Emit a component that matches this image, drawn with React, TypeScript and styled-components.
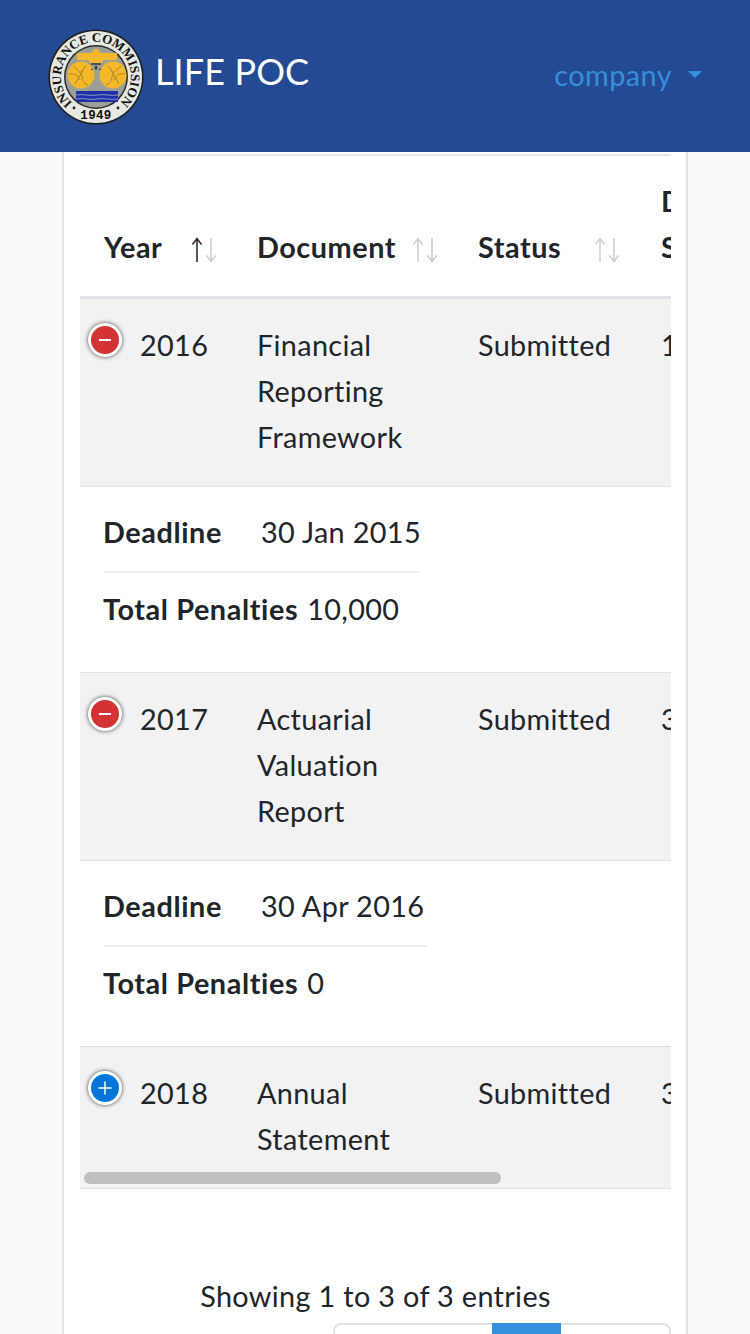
import React from "react";
import styled, { createGlobalStyle } from "styled-components";

const Global = createGlobalStyle`
  html, body { margin: 0; padding: 0; background: #f8fafc; }
  body { font-family: "Lato", "Open Sans", sans-serif; color: #212529; }
`;
const Page = styled.div`
  width: 750px; height: 1334px; overflow: hidden; background: #f8fafc;
  font-size: 28.8px; line-height: 46px; letter-spacing: 0.35px;
`;
const Header = styled.header`
  height: 152px; background: #234a92; display: flex; align-items: center;
  padding: 0 48px; box-sizing: border-box; justify-content: space-between;
`;
const Brand = styled.div`display: flex; align-items: center; gap: 11px; margin-top: 2px;`;
const BrandName = styled.span`color: #fff; font-size: 36px; letter-spacing: 0.1px; margin-bottom: 12px;`;
const Menu = styled.div`
  display: flex; align-items: center; gap: 16px; color: #3490dc; margin-top: -2px; letter-spacing: 0.45px;
`;
const Caret = styled.span`
  width: 0; height: 0; border-left: 7.5px solid transparent; border-right: 7.5px solid transparent;
  border-top: 7px solid #3490dc; margin-top: -2px;
`;
const Card = styled.main`
  width: 626px; box-sizing: border-box; margin-left: 62px; height: 1182px; background: #fff;
  border-left: 2px solid #e0e3e7; border-right: 2px solid #e0e3e7; padding: 2px 15px 0 16px;
`;
const TableWrap = styled.div`position: relative; overflow: hidden; width: 591px;`;
const Table = styled.table`
  border-collapse: collapse; table-layout: fixed; width: 1000px;
`;
const Th = styled.th<{ $w: number }>`
  position: relative; width: ${(p) => p.$w}px; box-sizing: border-box; padding: 22px 24px 26px;
  text-align: left; vertical-align: bottom; font-weight: 700; letter-spacing: 0.55px;
  border-top: 2px solid #e4e7ea; border-bottom: 3px solid #dee2e6;
`;
const Row = styled.tr<{ $h: number }>`
  height: ${(p) => p.$h}px; background: #f2f2f2;
`;
const Td = styled.td`
  padding: 23px 24px 26px; vertical-align: top; border-bottom: 1px solid #dee2e6; box-sizing: border-box;
  border-top: 1px solid #dee2e6;
`;
const YearCell = styled(Td)`position: relative; padding-left: 60px;`;
const Toggle = styled.span<{ $open: boolean }>`
  position: absolute; left: 8px; top: 24px; width: 28px; height: 28px; border: 3.5px solid #fff;
  border-radius: 50%; background: ${(p) => (p.$open ? "#d33333" : "#0275d8")};
  box-shadow: 0 0 4px #444; color: #fff; display: flex; align-items: center; justify-content: center;
`;
const DetailCell = styled.td`
  padding: 22px 24px 40px; border-top: 1px solid #dee2e6; vertical-align: top;
`;
const DetailList = styled.ul<{ $w: number }>`
  display: block; width: ${(p) => p.$w}px; list-style: none; margin: 0; padding: 0;
`;
const DetailItem = styled.li`
  padding: 0 0 16px; white-space: nowrap;
  & + & { border-top: 2px solid #efefef; padding: 13px 0 0; }
`;
const Label = styled.span`
  display: inline-block; font-weight: 700; letter-spacing: 0.6px; margin-right: 9px; margin-left: -1px;
`;
const DeadlineLabel = styled(Label)`width: 149px;`;
const ArrowBox = styled.span`position: absolute; bottom: 33px; display: flex; gap: 2px;`;
const ScrollThumb = styled.div`
  position: absolute; left: 4px; bottom: 5px; width: 417px; height: 12px; border-radius: 6px; background: #bfbfbf;
`;
const Info = styled.div`text-align: center; margin: 84px 0 4px;`;
const Pager = styled.nav`display: flex; justify-content: flex-end;`;
const PagerBox = styled.div`
  display: flex; border: 2px solid #dee2e6; border-radius: 8px; width: 338px; box-sizing: border-box; height: 80px;
`;
const PageItem = styled.span<{ $w: number; $active?: boolean }>`
  width: ${(p) => p.$w}px; box-sizing: border-box; text-align: center; padding-top: 14px; margin-top: -2px;
  background: ${(p) => (p.$active ? "#3490dc" : "transparent")};
  color: ${(p) => (p.$active ? "#fff" : "#6c757d")};
`;

const Arrow = ({ up, color }: { up?: boolean; color: string }) => (
  <svg width="12" height="26" viewBox="0 0 12 26" fill="none" stroke={color} strokeWidth="1.6">
    {up ? <path d="M6 25V2M1.5 7.5L6 1.5l4.500 6" /> : <path d="M6 1v23M1.500 18.500L6 24.500l4.500-6" />}
  </svg>
);
const Sort = ({ left, active }: { left: number; active?: boolean }) => (
  <ArrowBox style={{ left }}>
    <Arrow up color={active ? "#3a2a30" : "#cbd2d8"} />
    <Arrow color="#c9ced3" />
  </ArrowBox>
);

const Logo = () => (
  <svg width="96" height="96" viewBox="0 0 96 96" role="img" aria-label="Insurance Commission seal">
    <defs>
      <path id="arcTop" d="M24.600 74 A35 35 0 1 1 71.400 74" />
    </defs>
    <circle cx="48" cy="48" r="47.500" fill="#1d1d1d" />
    <circle cx="48" cy="48" r="46" fill="#e6e8e2" />
    <circle cx="48" cy="48" r="32" fill="#2a2c2c" />
    <circle cx="48" cy="48" r="30.500" fill="#9a9f98" />
    <text fontFamily="Liberation Serif, serif" fontWeight="700" fontSize="13" fill="#111">
      <textPath href="#arcTop" textLength="168" lengthAdjust="spacing">INSURANCE COMMISSION</textPath>
    </text>
    <text x="48" y="89.500" textAnchor="middle" fontFamily="Liberation Mono, monospace" fontWeight="700" fontSize="12.500" fill="#111">1949</text>
    <circle cx="26" cy="79" r="1.400" fill="#222" />
    <circle cx="70" cy="79" r="1.400" fill="#222" />
    <path d="M29 24h14l5-5 5 5h16v7H56l-2 3H42l-2-3H29z" fill="#f3b92b" />
    <path d="M43 34h10v2H43z" fill="#55524a" />
    <circle cx="33" cy="46" r="13.500" fill="#f3b92b" />
    <circle cx="65" cy="46" r="13.500" fill="#f3b92b" />
    <path d="M25 37c4 4 8 6 9 11s3 7 6 8M21 45c5-1 9 1 11 6M27 55l8-14M38 37l-5 6M73 37c-4 4-8 6-9 11s-3 7-6 8M77 45c-5-1-9 1-11 6M71 55l-8-14M60 37l5 6" stroke="#a9832a" strokeWidth="1" fill="none" />
    <path d="M48 36l1.500 3-1.500 2-1.500-2zM44 39l1 2h-2zM52 39l1 2h-2z" fill="#2c2c2c" />
    <path d="M28 62h42v11H28z" fill="#1f2fa8" />
    <path d="M28 66c7-1.500 14 1.500 21 0s14 1.500 21 0M28 70c7-1.500 14 1.500 21 0s14 1.500 21 0" stroke="#8a97c4" strokeWidth="1" fill="none" />
  </svg>
);

const MinusPlus = ({ open }: { open: boolean }) => (
  <svg width="14" height="14" viewBox="0 0 14 14" stroke="#fff" strokeWidth="1.500">
    {open ? <path d="M1 7h12" strokeWidth="2" /> : <path d="M0.500 7h13M7 0.500v13" />}
  </svg>
);

type Rec = { year: string; doc: string[]; date: string; deadline?: string; penalties?: string; listW?: number };
const rows: Rec[] = [
  { year: "2016", doc: ["Financial", "Reporting", "Framework"], date: "15 Jan 2015", deadline: "30 Jan 2015", penalties: "10,000", listW: 316 },
  { year: "2017", doc: ["Actuarial", "Valuation", "Report"], date: "30 Apr 2016", deadline: "30 Apr 2016", penalties: "0", listW: 323 },
  { year: "2018", doc: ["Annual", "Statement"], date: "30 Apr 2017" },
];

export default function App() {
  return (
    <Page>
      <Global />
      <Header>
        <Brand>
          <Logo />
          <BrandName>LIFE POC</BrandName>
        </Brand>
        <Menu>
          company
          <Caret />
        </Menu>
      </Header>
      <Card>
        <TableWrap>
          <Table>
            <thead>
              <tr>
                <Th $w={153}>Year<Sort left={111} active /></Th>
                <Th $w={221}>Document<Sort left={179} /></Th>
                <Th $w={183}>Status<Sort left={140} /></Th>
                <Th $w={443}>Date<br />Submitted</Th>
              </tr>
            </thead>
            <tbody>
              {rows.map((r) => (
                <React.Fragment key={r.year}>
                  <Row $h={r.doc.length * 46 + 49}>
                    <YearCell>
                      <Toggle $open={!!r.deadline}><MinusPlus open={!!r.deadline} /></Toggle>
                      {r.year}
                    </YearCell>
                    <Td>{r.doc.map((d) => <div key={d}>{d}</div>)}</Td>
                    <Td>Submitted</Td>
                    <Td>{r.date}</Td>
                  </Row>
                  {r.deadline && (
                    <tr>
                      <DetailCell colSpan={4}>
                        <DetailList $w={r.listW ?? 316}>
                          <DetailItem><DeadlineLabel>Deadline</DeadlineLabel>{r.deadline}</DetailItem>
                          <DetailItem><Label>Total Penalties</Label>{r.penalties}</DetailItem>
                        </DetailList>
                      </DetailCell>
                    </tr>
                  )}
                </React.Fragment>
              ))}
            </tbody>
          </Table>
          <ScrollThumb />
        </TableWrap>
        <Info>Showing 1 to 3 of 3 entries</Info>
        <Pager>
          <PagerBox>
            <PageItem $w={157}>Previous</PageItem>
            <PageItem $w={69} $active>1</PageItem>
            <PageItem $w={108}>Next</PageItem>
          </PagerBox>
        </Pager>
      </Card>
    </Page>
  );
}
